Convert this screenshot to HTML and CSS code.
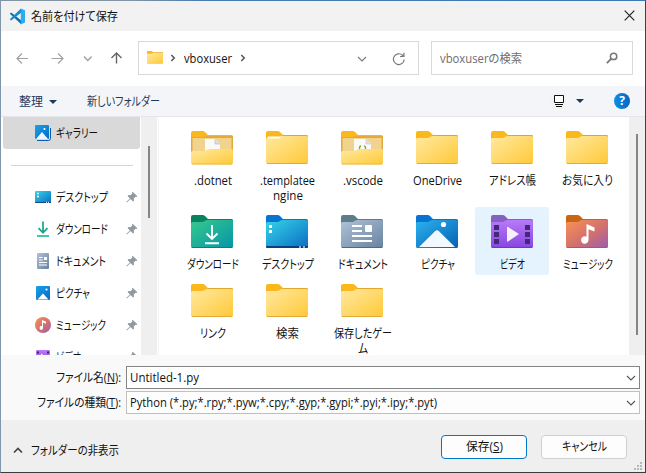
FILE: index.html
```html
<!DOCTYPE html>
<html lang="ja">
<head>
<meta charset="utf-8">
<title>名前を付けて保存</title>
<link rel="stylesheet" href="styles.css">
</head>
<body>
<svg class="defs" width="0" height="0">
  <defs>
    <linearGradient id="gy" x1="0" y1="0" x2="1" y2="1"><stop offset="0" stop-color="#ffe9a0"/><stop offset="1" stop-color="#ffc938"/></linearGradient>
    <linearGradient id="gg" x1="0" y1="0" x2="1" y2="1"><stop offset="0" stop-color="#36c98c"/><stop offset="1" stop-color="#0595a8"/></linearGradient>
    <linearGradient id="gb" x1="0" y1="0" x2="1" y2="1"><stop offset="0" stop-color="#35d5e8"/><stop offset="1" stop-color="#0b6cc4"/></linearGradient>
    <linearGradient id="gd" x1="0" y1="0" x2="1" y2="1"><stop offset="0" stop-color="#b0c2d8"/><stop offset="1" stop-color="#67839f"/></linearGradient>
    <linearGradient id="gp" x1="0" y1="0" x2="1" y2="1"><stop offset="0" stop-color="#2cb2ee"/><stop offset="1" stop-color="#0560b4"/></linearGradient>
    <linearGradient id="gv" x1="0" y1="0" x2="0" y2="1"><stop offset="0" stop-color="#b87af8"/><stop offset="1" stop-color="#8745e0"/></linearGradient>
    <linearGradient id="gm" x1="0" y1="0" x2="1" y2="1"><stop offset="0" stop-color="#fb9152"/><stop offset=".55" stop-color="#d1706f"/><stop offset="1" stop-color="#9b5eb0"/></linearGradient>
    <linearGradient id="gh" x1="0" y1="0" x2="1" y2="1"><stop offset="0" stop-color="#1aa2e8"/><stop offset="1" stop-color="#0669ca"/></linearGradient>
  </defs>
  <symbol id="tab" viewBox="0 0 42 34"><path d="M0 2Q0 0 2 0H11.500Q13 0 14 1L17 4H40.500Q42 4 42 5.500V15H0Z"/></symbol>
  <symbol id="body" viewBox="0 0 42 34"><path d="M0 8.500Q0 7 1.500 7H11Q12.500 7 13.500 6.200L14.500 5.600Q15.200 5 16.500 5H40.500Q42 5 42 6.500V31.500Q42 33 40.500 33H1.500Q0 33 0 31.500Z"/></symbol>
  <symbol id="plain" viewBox="0 0 42 34"><use href="#tab" fill="#fbb81c"/><path d="M17 4H40.500Q42 4 42 5.500V6H16Z" fill="#e5a52a"/><use href="#body" fill="url(#gy)"/><path d="M1 32.500H41" stroke="#e0ab3b"/></symbol>
  <symbol id="open" viewBox="0 0 42 34"><use href="#tab" fill="#fbb81c"/><path d="M0 7Q0 6 1 6H12L15 5H42V30H0Z" fill="#e4a93b"/><path d="M1.500 7H40.500V20H1.500Z" fill="#f2d38d"/></symbol>
  <symbol id="front" viewBox="0 0 42 34"><path d="M0 21.500Q0 20 1.500 20H12Q14 20 15.500 19L16.500 18.500Q17.500 18 19 18H40.500Q42 18 42 19.500V31.500Q42 33.500 40.500 33.500H1.500Q0 33.500 0 31.500Z" fill="url(#gy)"/><path d="M1 33H41" stroke="#e9bc55"/></symbol>
  <symbol id="pin" viewBox="0 0 12 12"><path d="M6.700.7 11.300 5.200 10.600 5.900 9.500 5.700 7.800 7.600 8 9.700 7 10.400 4.500 8 1.200 11.300 .5 11.300 .7 10.600 3.900 7.400 1.600 5 2.500 4 4.600 4.200 6.300 2.500 6 1.400Z" fill="#8e9ba5"/></symbol>
  <symbol id="chev" viewBox="0 0 10 10"><path d="M1 3 5 7 9 3" fill="none" stroke="currentColor" stroke-width="1.100"/></symbol>
  <symbol id="note" viewBox="0 0 14 20"><path d="M5 0 13 3.500V7.500L7 5.200V16A3.700 3.700 0 1 1 5 12.700Z" fill="#fff"/></symbol>
</svg>

<div class="window">
  <header class="title">
    <svg class="vs" width="17" height="17" viewBox="0 0 17 17"><path d="M.8 5.700 2.200 4.600 12 12.200V16L.8 5.700Z" fill="#0073b8"/><path d="M.8 11.300 2.200 12.400 12 4.800V.6L.8 11.300Z" fill="#138bd0"/><path d="M11.800.4 16 2.300V14.600L11.800 16.600Z" fill="#2babf0"/></svg>
    <span class="fit" data-w="87">名前を付けて保存</span>
    <svg class="close" width="11" height="11" viewBox="0 0 11 11"><path d="M.7.7 10.300 10.300M10.300.7.7 10.300" stroke="#222" stroke-width="1.200"/></svg>
  </header>

  <nav class="nav">
    <svg width="130" height="20" viewBox="0 0 130 20" fill="none" stroke-width="1.200"><g stroke="#a1a1a1"><path d="M27 10.500H16M21 5.500 16 10.500 21 15.500"/><path d="M50.500 10.500H62M57 5.500 62 10.500 57 15.500"/><path d="M83 8.500 86.800 12.500 90.600 8.500" stroke-width="1.400"/></g><path d="M115.500 15.500V5M110.500 10 115.500 5 120.500 10" stroke="#666" stroke-width="1.400"/></svg>
    <div class="address">
      <svg class="mini" width="16" height="13" viewBox="0 0 42 34" preserveAspectRatio="none"><use href="#plain"/></svg>
      <svg class="sep" width="6" height="8" viewBox="0 0 6 8"><path d="M1.300 1 4.300 4 1.300 7" fill="none" stroke="#555" stroke-width="1.500"/></svg>
      <span class="fit" data-w="48">vboxuser</span>
      <svg class="sep2" width="6" height="8" viewBox="0 0 6 8"><path d="M1.300 1 4.300 4 1.300 7" fill="none" stroke="#555" stroke-width="1.500"/></svg>
      <svg class="down" width="10" height="10"><use href="#chev"/></svg>
      <svg class="reload" width="14" height="14" viewBox="0 0 14 14" fill="none" stroke="#777" stroke-width="1.200"><path d="M12.200 7.500A5.400 5.400 0 1 1 10.500 3.200L11.700 4.300M11.900.8V4.500H8"/></svg>
    </div>
    <div class="search">
      <span class="fit" data-w="82">vboxuserの検索</span>
      <svg width="12" height="12" viewBox="0 0 12 12" fill="none" stroke="#777"><circle cx="7.600" cy="4.400" r="3.200" stroke-width="1.500"/><path d="M5.300 6.700.9 11.100" stroke-width="1.900"/></svg>
    </div>
  </nav>

  <div class="toolbar">
    <span class="fit" data-w="24">整理</span>
    <svg class="tri t1" width="8" height="4" viewBox="0 0 8 4"><path d="M0 0H8L4 4Z" fill="#1e395b"/></svg>
    <span class="fit" data-w="73">新しいフォルダー</span>
    <span class="view"><svg width="10" height="12" viewBox="0 0 10 12"><path d="M.5.500H9.500V7.500H.5Z" fill="#fff" stroke="#111"/><path d="M1 9.500H9M2 11.500H8" stroke="#111"/></svg></span>
    <svg class="tri" width="8" height="4" viewBox="0 0 8 4"><path d="M0 0H8L4 4Z" fill="#1e395b"/></svg>
    <span class="help">?</span>
  </div>

  <main class="content">
    <aside class="side">
      <div class="item active"><svg width="16" height="16" viewBox="0 0 16 16"><path d="M2 15.500H13.500Q15.500 15.500 15.500 13.500V3" fill="none" stroke="#0b5eac" stroke-width="1"/><rect width="14" height="14" rx="1" fill="url(#gh)"/><path d="M1 14 7 7 13 14Z" fill="#eef7ff"/><circle cx="9.500" cy="4" r="1.100" fill="#fff"/></svg><span class="fit" data-w="42">ギャラリー</span></div>
      <div class="rule"></div>
      <div class="item"><svg width="16" height="16" viewBox="0 0 16 16"><rect y="2" width="16" height="12" rx="1" fill="url(#gb)"/><path d="M0 13H16V13.500Q16 14 15 14H1Q0 14 0 13Z" fill="#084b8c"/><path d="M2 4.500H4M2 7.500H4" stroke="#fff" stroke-width="1.700"/><path d="M11 13.300H12M13 13.300H14" stroke="#fff"/></svg><span class="fit" data-w="52">デスクトップ</span><svg class="pin" width="12" height="12"><use href="#pin"/></svg></div>
      <div class="item"><svg width="16" height="16" viewBox="0 0 16 16" fill="none" stroke="#18a58c" stroke-width="1.700"><path d="M8 .5V11.500M3.500 7.200 8 11.700 12.500 7.200"/><path d="M2 15H14" stroke="#29bd91"/></svg><span class="fit" data-w="52">ダウンロード</span><svg class="pin" width="12" height="12"><use href="#pin"/></svg></div>
      <div class="item"><svg width="16" height="16" viewBox="0 0 16 16"><rect x="2" width="12" height="16" rx="1" fill="url(#gd)"/><path d="M4 4.500H7.500M4 7H7.500M4 9.500H12M4 12H12" stroke="#fff"/><path d="M9 4H12V7H9Z" fill="#fff"/></svg><span class="fit" data-w="50">ドキュメント</span><svg class="pin" width="12" height="12"><use href="#pin"/></svg></div>
      <div class="item"><svg width="16" height="16" viewBox="0 0 16 16"><rect x="1" y="1" width="14" height="14" rx="1" fill="url(#gh)"/><path d="M2.500 14.500 8 8.500 13.500 14.500Z" fill="#fff"/><circle cx="11.500" cy="4.500" r="1.100" fill="#fff"/></svg><span class="fit" data-w="34">ピクチャ</span><svg class="pin" width="12" height="12"><use href="#pin"/></svg></div>
      <div class="item"><svg width="16" height="16" viewBox="0 0 16 16"><circle cx="8" cy="8" r="8" fill="url(#gm)"/><use href="#note" x="4.500" y="3" width="7" height="10"/></svg><span class="fit" data-w="50">ミュージック</span><svg class="pin" width="12" height="12"><use href="#pin"/></svg></div>
      <div class="item"><svg width="16" height="16" viewBox="0 0 16 16"><rect x="1" y="1" width="14" height="14" rx="1" fill="url(#gv)"/><path d="M2 3.500H4M12 3.500H14M2 8H4M12 8H14" stroke="#432168" stroke-width="2"/><path d="M6 4.500 11 8 6 11.500Z" fill="#fff"/></svg><span class="fit" data-w="25">ビデオ</span><svg class="pin" width="12" height="12"><use href="#pin"/></svg></div>
    </aside>
    <div class="bar"><i class="thumb1"></i></div>
    <section class="files">
      <div class="file"><svg viewBox="0 0 42 34"><use href="#open"/><path d="M14 8H24L29 13V22H14Z" fill="#fafafa"/><path d="M24 8V13H29" fill="#ddd" stroke="#bbb" stroke-width=".7"/><use href="#front"/></svg><span class="fit" data-w="38">.dotnet</span></div>
      <div class="file"><svg viewBox="0 0 42 34"><use href="#plain"/><path d="M1 7.500 2 5.500H16L13 7.500Z" fill="#fff"/></svg><span class="fit" data-w="55">.templatee</span><span class="fit" data-w="30">ngine</span></div>
      <div class="file"><svg viewBox="0 0 42 34"><use href="#open"/><path d="M13 8H25L30 13V22H13Z" fill="#fafafa"/><path d="M25 8V13H30" fill="#ddd" stroke="#ccc" stroke-width=".7"/><path d="M20 15Q18.500 15 18.500 17V19M23 15Q24.500 15 24.500 17V19" fill="none" stroke="#93a82b" stroke-width="1.400"/><use href="#front"/></svg><span class="fit" data-w="40">.vscode</span></div>
      <div class="file"><svg viewBox="0 0 42 34"><use href="#plain"/></svg><span class="fit" data-w="49">OneDrive</span></div>
      <div class="file"><svg viewBox="0 0 42 34"><use href="#plain"/></svg><span class="fit" data-w="47">アドレス帳</span></div>
      <div class="file"><svg viewBox="0 0 42 34"><use href="#plain"/></svg><span class="fit" data-w="51">お気に入り</span></div>

      <div class="file"><svg viewBox="0 0 42 34"><use href="#tab" fill="#08835f"/><use href="#body" fill="url(#gg)"/><path d="M1 32.500H41" stroke="#087f83"/><path d="M21 10V24M15.500 18.500 21 24 26.500 18.500M14 28.200H28" fill="none" stroke="#fff" stroke-width="1.900"/></svg><span class="fit" data-w="52">ダウンロード</span></div>
      <div class="file"><svg viewBox="0 0 42 34"><use href="#tab" fill="#0674d0"/><use href="#body" fill="url(#gb)"/><path d="M0 31H42V31.500Q42 33 40.500 33H1.500Q0 33 0 31.500Z" fill="#08407d"/><path d="M3 11.500H6M3 16.500H6" stroke="#fff" stroke-width="3"/><path d="M33 32H35M37 32H39" stroke="#bcd9f0" stroke-width="1.500"/></svg><span class="fit" data-w="52">デスクトップ</span></div>
      <div class="file"><svg viewBox="0 0 42 34"><use href="#tab" fill="#5d7d88"/><use href="#body" fill="url(#gd)"/><path d="M1 32.500H41" stroke="#4e6b82"/><path d="M11 11H21M11 16H21M11 21H31M11 26H31" stroke="#fff" stroke-width="2"/><rect x="24" y="10" width="7" height="7" rx="1" fill="#fff"/></svg><span class="fit" data-w="50">ドキュメント</span></div>
      <div class="file"><svg viewBox="0 0 42 34"><use href="#tab" fill="#0674d0"/><use href="#body" fill="url(#gp)"/><path d="M3 32 19 16.200Q21 14.200 23 16.200L39 32Z" fill="#f1f8ff"/><circle cx="27.500" cy="9.500" r="2.600" fill="#fff"/></svg><span class="fit" data-w="34">ピクチャ</span></div>
      <div class="file hover"><svg viewBox="0 0 42 34"><use href="#tab" fill="#8560c0"/><use href="#body" fill="url(#gv)"/><path d="M1 32.500H41" stroke="#6d3cb0"/><path d="M3 10H8V15H3ZM3 17H8V22H3ZM3 24H8V29H3ZM34 10H39V15H34ZM34 17H39V22H34ZM34 24H39V29H34Z" fill="#432a76"/><path d="M17 12 28 19 17 26.500Q16 27 16 26V12.500Q16 11.400 17 12Z" fill="#f5f2fa"/></svg><span class="fit" data-w="25">ビデオ</span></div>
      <div class="file"><svg viewBox="0 0 42 34"><use href="#tab" fill="#c96616"/><use href="#body" fill="url(#gm)"/><path d="M1 32.500H41" stroke="#a05b76"/><use href="#note" x="15" y="9" width="15" height="20"/></svg><span class="fit" data-w="50">ミュージック</span></div>

      <div class="file"><svg viewBox="0 0 42 34"><use href="#plain"/></svg><span class="fit" data-w="26">リンク</span></div>
      <div class="file"><svg viewBox="0 0 42 34"><use href="#plain"/></svg><span class="fit" data-w="23">検索</span></div>
      <div class="file"><svg viewBox="0 0 42 34"><use href="#plain"/></svg><span class="fit" data-w="58">保存したゲー</span><span class="fit" data-w="10">ム</span></div>
    </section>
    <div class="bar right"><i class="thumb2"></i></div>
  </main>

  <div class="fields">
    <div class="row"><label><span class="fit" data-w="65">ファイル名(<u>N</u>):</span></label><div class="box name"><span class="fit" data-w="69">Untitled-1.py</span><svg width="10" height="10"><use href="#chev"/></svg></div></div>
    <div class="row"><label><span class="fit" data-w="84">ファイルの種類(<u>T</u>):</span></label><div class="box"><span class="fit" data-w="307">Python (*.py;*.rpy;*.pyw;*.cpy;*.gyp;*.gypi;*.pyi;*.ipy;*.pyt)</span><svg width="10" height="10"><use href="#chev"/></svg></div></div>
  </div>

  <footer class="footer">
    <svg class="up" width="10" height="7" viewBox="0 0 10 7"><path d="M1 5.500 5 1.500 9 5.500" fill="none" stroke="#444" stroke-width="1.700"/></svg>
    <span class="fit" data-w="88">フォルダーの非表示</span>
    <div class="btn primary"><span class="fit" data-w="37">保存(<u>S</u>)</span></div>
    <div class="btn"><span class="fit" data-w="45">キャンセル</span></div>
    <svg class="grip" width="8" height="8" viewBox="0 0 8 8"><path d="M6 0H8V2H6ZM3 3H5V5H3ZM6 3H8V5H6ZM0 6H2V8H0ZM3 6H5V8H3ZM6 6H8V8H6Z" fill="#b8b8b8"/></svg>
  </footer>
</div>
<script src="fit.js"></script>
</body>
</html>
```
FILE: styles.css
```css
* { box-sizing: border-box; }
body {
  margin: 0;
  width: 646px;
  height: 473px;
  overflow: hidden;
  font: 12px/15px "Open Sans", "Noto Sans CJK JP", sans-serif;
  font-feature-settings: "palt";
  color: #111;
  background: linear-gradient(90deg, #8394a5 0 20%, #447cb0 32%, #3a78b5 100%);
}
svg { display: block; flex: none; }
.defs { position: absolute; }
.window {
  display: flex;
  flex-direction: column;
  height: 473px;
  border: 1px solid;
  border-color: transparent #404040 #3c3c3c #7f96ac;
  background: #fff padding-box;
}
.fit {
  display: inline-block;
  flex: none;
  white-space: nowrap;
  transform-origin: 0 50%;
}
u { text-underline-offset: 1px; text-decoration-thickness: 1px; }

.title { height: 30px; display: flex; align-items: center; padding: 0 10px 0 8px; background: #f2f2f2; }
.vs { margin-right: 5px; }
.close { margin-left: auto; margin-top: -2px; }

.nav { height: 55px; display: flex; align-items: center; padding-bottom: 1px; }
.nav > svg { margin-right: 6px; }
.nav > svg + .address { margin-left: 1px; }
.address, .search { height: 34px; border: 1px solid #d9d9d9; display: flex; align-items: center; }
.address { width: 281px; padding: 0 12px 0 8px; }
.mini { margin-top: -2px; }
.sep { margin: 0 8px 0 7px; }
.sep2 { margin-left: 8px; }
.down { margin: 2px 25px 0 auto; color: #777; }
.reload { margin-top: 1px; }
.search { width: 202px; margin-left: 12px; padding: 0 14px 0 8px; justify-content: space-between; color: #6d6d6d; }

.toolbar { height: 31px; display: flex; align-items: center; padding: 0 15px 0 18px; background: #f3f5f8; border-bottom: 1px solid #e5e6e8; color: #1e395b; }
.t1 { margin: 1px 30px 0 6px; }
.view { width: 15px; height: 16px; margin: 0 10px 0 auto; display: flex; align-items: center; justify-content: center; background: #f3f3f1; }
.help { width: 16px; height: 16px; margin-left: 30px; border-radius: 50%; background: linear-gradient(90deg, #0d8fe5, #0764bf); color: #fff; font-weight: 700; line-height: 16px; text-align: center; }

.content { height: 238px; display: flex; overflow: hidden; }
.side { width: 140px; overflow: hidden; }
.item { height: 32px; display: flex; align-items: center; padding: 0 3px 0 34px; }
.item > .fit { margin-left: 5px; }
.pin { margin-left: auto; }
.active { width: 137px; margin-left: 2px; padding-left: 32px; background: #d9d9d9; border-radius: 0 0 3px 3px; }
.rule { height: 1px; margin: 16px 8px 15px 10px; background: #d6d6d6; }
.bar { width: 16px; background: #efefef; }
.bar i { display: block; width: 2px; background: #858585; }
.thumb1 { height: 72px; margin: 29px 0 0 7px; }
.thumb2 { height: 201px; margin: 17px 0 0 7px; }
.files {
  width: 472px;
  display: grid;
  grid-template-columns: repeat(6, 74px);
  grid-template-rows: 84px 68px 79px;
  column-gap: 1px;
  row-gap: 0;
  align-content: start;
  padding: 6px 0 0 16px;
  border-left: 1px solid #f5f5f5;
  margin-left: 1px;
}
.file { display: flex; flex-direction: column; align-items: center; padding-top: 8px; border-radius: 3px; }
.file > .fit { left: 1px; position: relative; }
.file:nth-child(n+13) { margin-top: 1px; }
.file svg { width: 42px; height: 34px; margin-bottom: 8px; }
.hover { background: #e5f3ff; }

.fields { height: 65px; padding-top: 11px; background: #f9f9f9; }
.row { display: flex; height: 23px; margin-bottom: 2px; }
.row label { width: 125px; padding: 4px 5px 0 0; text-align: right; }
.box { width: 514px; display: flex; align-items: center; justify-content: space-between; padding: 0 3px; border: 1px solid #c0c0c0; background: #fdfdfd; }
.box svg { color: #555; }
.name { background: #fff; border-color: #858585; }

.footer { position: relative; height: 52px; display: flex; align-items: center; padding: 0 18px 0 12px; background: #efefef; }
.up { margin: 8px 8px 0 0; }
.footer > .fit { margin-top: 8px; }
.btn { width: 86px; height: 24px; margin: 1px 0 0 14px; display: flex; align-items: center; justify-content: center; border: 1px solid #d0d0d0; border-radius: 4px; background: #fdfdfd; }
.primary { margin-left: auto; border-color: #0078c8; }
.grip { position: absolute; right: 3px; bottom: 2px; }
```
FILE: fit.js
```js
// Condenses each label to its designed width, in pixels (data-w).
document.querySelectorAll('.fit').forEach(function (el) {
  var target = Number(el.dataset.w);
  var natural = el.getBoundingClientRect().width;
  el.style.transform = 'scaleX(' + target / natural + ')';
  el.style.marginRight = (target - natural) + 'px';
});
```
